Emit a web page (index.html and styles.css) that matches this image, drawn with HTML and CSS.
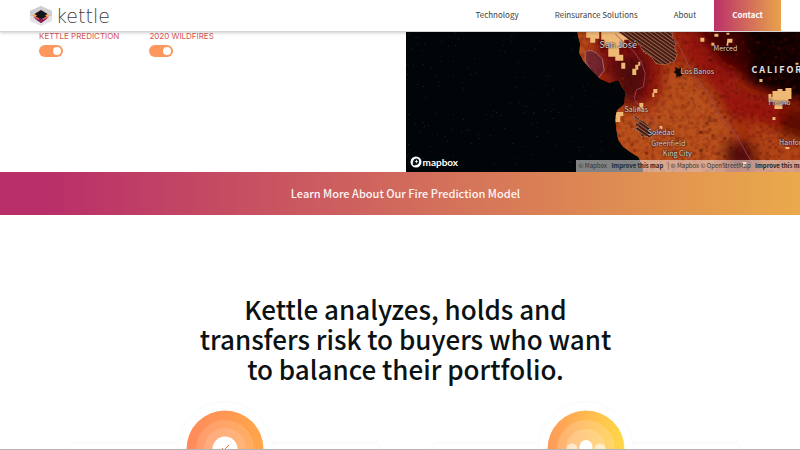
FILE: index.html
```html
<!DOCTYPE html>
<html lang="en">
<head>
<meta charset="utf-8">
<title>Kettle</title>
<meta name="viewport" content="width=device-width, initial-scale=1">
<link rel="stylesheet" href="styles.css">
</head>
<body>
<div class="page">
  <header class="header">
    <a class="logo" href="#" aria-label="Kettle home">
      <svg class="logo-mark" viewBox="0 0 22 20" aria-hidden="true">
        <path fill="#e2e1e3" d="M11 0 22 5v10l-11 5L0 15V5z"/>
        <path fill="#cfcdd1" d="M11 0 22 5v5H0V5z"/>
        <path fill="#7c1f55" d="m11 8.500 6.500 4-6.500 4.500-6.500-4.500z"/>
        <path fill="#d9436c" d="m11 7 8 4-8 4.500L3 11z"/>
        <path fill="#f9a850" d="m11 5 9 4.500-9 4.500-9-4.500z"/>
        <path fill="#171419" d="m11 4 6.500 4-2.500 1.500 1.500 1-5.500 3-5.500-3 1.500-1L4.500 8z"/>
        <path fill="#8f1b58" d="m11 12.500 4 1.500-4 3-4-3z"/>
      </svg>
      <span class="logo-name">kettle</span>
    </a>
    <nav class="nav">
      <a href="#">Technology</a>
      <a href="#">Reinsurance Solutions</a>
      <a href="#">About</a>
      <a class="contact" href="#">Contact</a>
    </nav>
  </header>
  <main>
    <section class="explorer">
      <div class="layers">
        <label class="layer">KETTLE PREDICTION<input type="checkbox" role="switch" checked></label>
        <label class="layer">2020 WILDFIRES<input type="checkbox" role="switch" checked></label>
      </div>
      <div class="map">
        <svg class="map-art" viewBox="406 32 405 140" preserveAspectRatio="xMinYMax slice" role="img" aria-label="Fire risk map of central California">
          <defs>
            <clipPath id="land"><path d="M577 32 578 37 580 44 579 53 583 61 590 69 600 79 609 83 618 80 621 86 625 92 624 104 617 110 615 117 616 129 618 140 623 147 630 152 638 157 642 165 643 172H811V32z"/></clipPath>
            <filter id="soft" x="-30%" y="-30%" width="160%" height="160%"><feGaussianBlur stdDeviation="6"/></filter>
            <filter id="grain" x="0" y="0" width="100%" height="100%"><feTurbulence type="fractalNoise" baseFrequency=".2" numOctaves="3" seed="8"/><feColorMatrix values="0 0 0 0 .12  0 0 0 0 0  0 0 0 0 0  .700 0 0 0 -.3"/></filter>
            <pattern id="hatch" width="3" height="3" patternUnits="userSpaceOnUse" patternTransform="rotate(-55)"><path fill="#401a13" d="M0 0h3v3H0z"/><path fill="#a0644b" d="M0 0h1v3H0z"/></pattern>
          </defs>
          <path fill="#010507" d="M406 32h405v140H406z"/>
          <g id="stars"></g>
          <g clip-path="url(#land)">
            <path fill="#a5300e" d="M570 32h241v140H570z"/>
            <g filter="url(#soft)">
              <path fill="#b9511f" d="M600 108l50 4 14-44 26 0 24 32 20 32-8 30-20 20H600zM570 26h18v50h-18z"/>
              <path fill="#780d0a" d="M592 30h44l20 30-2 40-26 6-22-28z"/>
              <path fill="#4f0808" d="M610 58h34l8 34-30 12z"/>
              <path fill="#96140a" d="M650 66h16l-4 32-18 8zM676 28h50l20 50-32 10-24-18z"/>
              <path fill="#0b0303" d="M728 18h104v88l-44-6-38-14-24-28z"/>
              <path fill="#3d0504" d="M694 26h46l10 50-28-10z"/>
              <path fill="#981407" d="M712 82 750 92 800 108v34l-40-18-34-8z"/>
              <path fill="#5d0a05" d="M780 108h40v40l-40-10z"/>
              <path fill="#520b07" d="M722 142h30l8 22-34 6z"/>
              <path fill="#b24416" d="M748 120l34 14 30 12v30h-50z"/>
            </g>
            <path filter="url(#grain)" d="M570 32h241v140H570z"/>
            <g id="cells"></g>
            <path fill="#eeb875" d="M605 32h31v3h-8v5h-4v8h-5v7h4v6h-8v-4h-7V46h-4v-6h-3v-8h4zM586 32h13v7h-4v4h-5v-5h-4zM772 91h5v-2h5v2h3v-3h6v11h-3v5h-6v5h-8v-7h-6v-5h4zM635 65h3v-3h2v4h-2v4h-2v5h-4v-6h3zM621 63h4v6h-4zM615 112h8v4h-3v6h-6v-3h2zM653 89h4v4h-3v4h-2v-4h1zM639 103h4v8h-6v-4h2zM700 38h4v4h-4zM714 34h4v3h-4zM727 39h5v4h-4v3h-2zM711 43h3v3h-3zM759 79h3v3h-3zM768 94h3v4h-3zM772 117h3v3h-3zM785 147h4v2h-4zM742 162h4v5h-4zM659 126h3v3h-3zM795 63h3v2h-3zM726 33h3v2h-3z"/>
            <g fill="url(#hatch)" stroke="#c98c6c" stroke-width=".7" stroke-dasharray="2 1"><path d="M618 32h54v6l4 5-2 4 3 8-3 7-5 1-2 2-11-1-6-8-6-3-5-8-8-2-5-5z"/><path d="m634 115 6 5 3 1 6 5 1 5 5 1-5 6-4-2-4 1-4-6-5-2 5-2-4-3 5-2-6-4z"/></g>
            <path fill="#5a1f3aaa" stroke="#b5747f" stroke-width=".8" d="M585 52q5-3 11 1l6 6 2 12-3 3-3 5q-9-9-13-18z"/>
            <g fill="none" stroke="#994b60" stroke-width=".8"><path d="m615 34 9 9 9 8 8 11 4 12-2 13-7 3-2 9 8 12 14 14 9 8 8 18 4 21M672 32l6 13 14 28 16 21 11 21 18 22 10 18 12 17"/></g>
            <path fill="#100b0b" d="m675 67 3 2 3-1-1 4 2 3-3 2-1-1-2 2v-4l-3-2 2-1z"/>
          </g>
          <g class="places">
            <text x="618" y="48" class="city">San José</text>
            <text x="725" y="51">Merced</text>
            <text x="697" y="74" class="town">Los Banos</text>
            <text x="751" y="73" class="state">CALIFORNIA</text>
            <text x="779" y="105">Fresno</text>
            <text x="636" y="112">Salinas</text>
            <text x="661" y="135" class="town">Soledad</text>
            <text x="668" y="146" class="town">Greenfield</text>
            <text x="677" y="156" class="town">King City</text>
            <text x="792" y="145">Hanford</text>
          </g>
        </svg>
        <a class="mapbox" href="#" aria-label="Mapbox">
          <svg viewBox="0 0 12 12" aria-hidden="true"><circle cx="6" cy="6" r="5.500" fill="#fff"/><path fill="#10171a" d="M3 9.300C2.400 6.300 3.200 2.600 6.600 2.600a3 3 0 0 1 2.600 3C9.200 8.800 6 9.800 3 9.300z"/><path fill="#fff" d="m6.500 3.500.6 1.400 1.400.6-1.400.6-.6 1.400-.6-1.400-1.400-.6 1.400-.6z"/></svg>
          <span>mapbox</span>
        </a>
        <div class="attribution"><a href="#">© Mapbox</a> <a class="improve" href="#">Improve this map</a> | <a href="#">© Mapbox</a> <a href="#">© OpenStreetMap</a> <a class="improve" href="#">Improve this map</a></div>
      </div>
    </section>
    <a class="banner" href="#">Learn More About Our Fire Prediction Model</a>
    <section class="pitch">
      <h1>Kettle analyzes, holds and transfers risk to buyers who want to balance their portfolio.</h1>
      <div class="cards">
        <article class="card">
          <svg class="badge" viewBox="0 0 96 96" aria-hidden="true">
            <defs><linearGradient id="coral"><stop stop-color="#ff8a5c"/><stop offset="1" stop-color="#ffa64a"/></linearGradient></defs>
            <circle cx="48" cy="48" r="47.500" fill="#fff" stroke="#fafafa"/>
            <circle cx="48" cy="48" r="38.500" fill="url(#coral)"/>
            <g fill="#fff" fill-opacity=".13"><circle cx="48" cy="48" r="29"/><circle cx="48" cy="48" r="21"/></g>
            <circle cx="48" cy="48" r="12.500" fill="#fff"/>
            <path d="m48 48 4-4M46 47l-1 1" fill="none" stroke="#ef7549"/>
          </svg>
        </article>
        <article class="card">
          <svg class="badge" viewBox="0 0 96 96" aria-hidden="true">
            <defs><linearGradient id="amber"><stop stop-color="#ff9a59"/><stop offset="1" stop-color="#ffd847"/></linearGradient></defs>
            <circle cx="48" cy="48" r="47.500" fill="#fff" stroke="#fafafa"/>
            <circle cx="48" cy="48" r="38.500" fill="url(#amber)"/>
            <g fill="#fff" fill-opacity=".17"><circle cx="48" cy="48" r="29"/><circle cx="48" cy="48" r="20"/></g>
            <g fill="#fff"><ellipse cx="48" cy="46" rx="6.500" ry="7"/><circle cx="34" cy="48" r="5.500" opacity=".6"/><circle cx="62" cy="48" r="5.500" opacity=".6"/></g>
          </svg>
        </article>
      </div>
    </section>
  </main>
</div>
<script src="map.js"></script>
</body>
</html>
```
FILE: styles.css
```css
* { box-sizing: border-box; }
html, body { height: 100%; }
body {
  margin: 0;
  overflow: hidden;
  border-bottom: 1px solid #b5b3b3;
  background: #fff;
  color: #0b1214;
  font-family: "Noto Sans CJK JP", "Open Sans", sans-serif;
}
a { color: inherit; text-decoration: none; }

.page { margin-right: -11px; }

.header {
  position: relative;
  z-index: 2;
  display: flex;
  justify-content: space-between;
  height: 32px;
  padding: 0 30px;
  background: #fff;
  border-bottom: 1px solid #d5d5d5;
  box-shadow: 0 1px 3px #0003;
}
.logo { display: flex; align-items: center; gap: 4px; }
.logo-mark { width: 22px; height: 20px; }
.logo-name { color: #3c3c3c; font-family: "DejaVu Sans", sans-serif; font-size: 19px; font-weight: 200; line-height: 30px; }
.nav { display: flex; gap: 36px; color: #404040; font-size: 8px; line-height: 30px; }
.contact {
  margin-left: -18px;
  padding: 0 18px;
  color: #fff;
  font-weight: 700;
  background: linear-gradient(90deg, #bc3069, #e8a44c);
}

.explorer { display: grid; grid-template-columns: 1fr 1fr; }
.layers { display: flex; align-items: flex-start; gap: 30px; padding: 0 39px; }
.layer {
  display: flex;
  flex-direction: column;
  gap: 4px;
  color: #d95555;
  font-family: Inter, sans-serif;
  font-size: 8px;
  line-height: 9px;
}
.layer input {
  appearance: none;
  display: flex;
  justify-content: flex-end;
  width: 24px;
  height: 12px;
  margin: 0;
  padding: 2px;
  border-radius: 6px;
  background: #fd975d;
}
.layer input::before { content: ""; width: 8px; height: 8px; border-radius: 50%; background: #fff; }
.layer input:not(:checked) { justify-content: flex-start; background: #bbb; }

.map { position: relative; height: 140px; background: #010507; }
.map-art { display: block; width: 100%; height: 100%; }
.places { fill: #dcd7d5; text-anchor: middle; font-size: 7px; text-shadow: 0 0 1px #1a0b0a, 0 0 2px #1a0b0a; }
.city { font-size: 9px; }
.state { fill: #e4e0e0; font-size: 9px; font-weight: 700; letter-spacing: 2px; text-anchor: start; }
.mapbox {
  position: absolute;
  left: 4px;
  bottom: 4px;
  display: flex;
  align-items: center;
  gap: 1px;
  color: #fff;
  font: 700 10px/12px Lato, sans-serif;
}
.mapbox svg { width: 12px; height: 12px; }
.attribution {
  position: absolute;
  left: 170px;
  right: 0;
  bottom: 0;
  overflow: hidden;
  padding-left: 3px;
  background: #ffffff80;
  color: #303030;
  font-size: 6px;
  line-height: 12px;
  white-space: nowrap;
}
.improve { margin: 0 3px; color: #262626; font-weight: 700; }

.banner {
  display: block;
  color: #fff5f5;
  background: linear-gradient(90deg, #b92f69 6%, #d16a5c 50%, #eaa94b 98%);
  font-size: 11px;
  font-weight: 500;
  line-height: 43px;
  text-align: center;
}

.pitch { padding: 79px 72px 0; }
h1 { max-width: 425px; margin: 0 auto; font-size: 26px; font-weight: 500; line-height: 30px; text-align: center; }
.cards { display: grid; grid-template-columns: 1fr 1fr; gap: 54px; padding-top: 60px; }
.card { display: flex; justify-content: center; height: 200px; border-radius: 4px; box-shadow: 0 0 5px #0000000d; }
.badge { width: 96px; height: 96px; margin-top: -43px; }
```
FILE: map.js
```js
const svgNS = "http://www.w3.org/2000/svg";
let seed = 17;
function random() {
  seed = (seed * 16807) % 2147483647;
  return seed / 2147483647;
}
function square(parent, x, y, size, fill, opacity) {
  const rect = document.createElementNS(svgNS, "rect");
  const attrs = { x, y, width: size, height: size, fill, opacity };
  for (const name in attrs) rect.setAttribute(name, attrs[name]);
  parent.append(rect);
}

// Faint points over the ocean
const stars = document.getElementById("stars");
for (let i = 0; i < 150; i++) {
  square(stars, 406 + Math.floor(random() * 230), 32 + Math.floor(random() * 138), 1, "#25283c", 0.8);
}

// Risk grid: small cells that darken or warm the heat layer
const cells = document.getElementById("cells");
for (let i = 0; i < 1000; i++) {
  const x = 576 + Math.floor(random() * 78) * 3;
  const y = 32 + Math.floor(random() * 47) * 3;
  const tone = random();
  square(cells, x, y, 3, tone < 0.65 ? "#320000" : "#a0200a", 0.06 + random() * 0.16);
}
```
